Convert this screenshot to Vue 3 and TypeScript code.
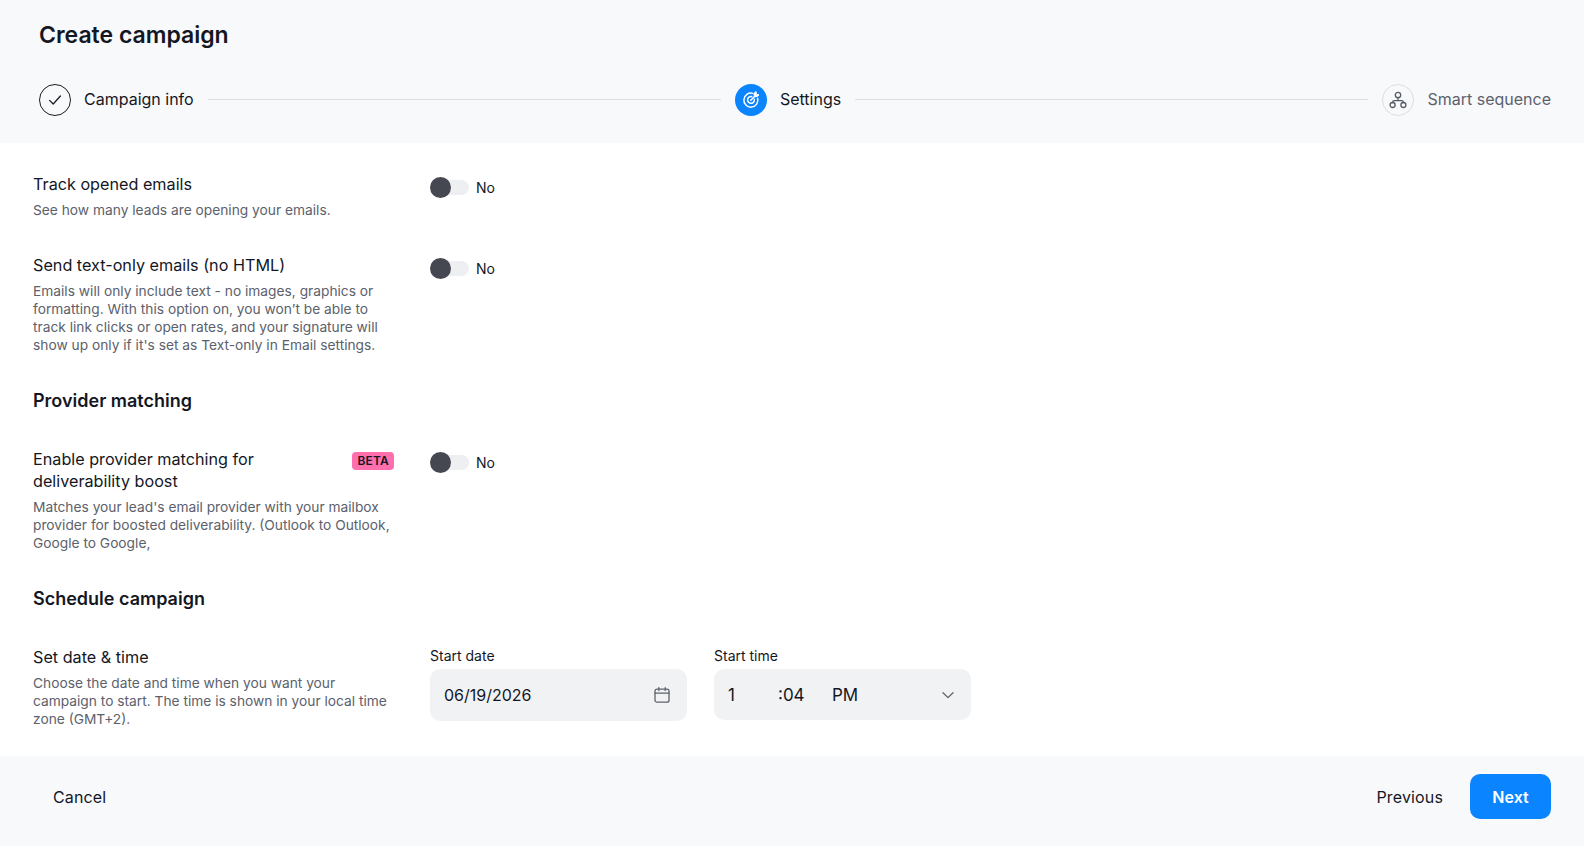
<template>
  <div class="page">
    <header class="top">
      <h1 class="title">Create campaign</h1>
      <div class="steps">
        <div class="step">
          <span class="dot dot-done">
            <svg width="16" height="16" viewBox="0 0 16 16" fill="none" stroke="#1a1d24" stroke-width="1.3" stroke-linecap="round" stroke-linejoin="round"><path d="M2.6 8.4 6.2 12l7.2-8" /></svg>
          </span>
          <span class="step-name">Campaign info</span>
        </div>
        <div class="step-line"></div>
        <div class="step">
          <span class="dot dot-active">
            <svg width="20" height="20" viewBox="0 0 20 20" fill="none" stroke="#fff" stroke-width="1.5" stroke-linecap="round" stroke-linejoin="round">
              <path d="M16.6 8.2a7 7 0 1 1-4.8-4.8" />
              <path d="M13.3 9.2a3.4 3.4 0 1 1-2.6-2.6" />
              <path d="M9.8 10.2 15 5" />
              <path d="M13 4.6 13.3 2.9 15 1.5l.4 2.9 2.6.4-1.6 1.6-1.9.3z" fill="#fff" stroke-width="1" />
            </svg>
          </span>
          <span class="step-name">Settings</span>
        </div>
        <div class="step-line"></div>
        <div class="step">
          <span class="dot dot-todo">
            <svg width="20" height="20" viewBox="0 0 20 20" fill="none" stroke="#555a65" stroke-width="1.3" stroke-linecap="round" stroke-linejoin="round">
              <circle cx="10" cy="5" r="2.7" />
              <circle cx="4.6" cy="15" r="2.5" />
              <circle cx="15.4" cy="15" r="2.5" />
              <path d="M10 7.7v3M4.6 12.5c0-1.2.6-1.8 1.8-1.8h7.2c1.2 0 1.8.6 1.8 1.8" />
            </svg>
          </span>
          <span class="step-name step-name-todo">Smart sequence</span>
        </div>
      </div>
    </header>

    <main class="content">
      <section v-for="row in toggleRows" :key="row.label" class="row" :class="row.cls">
        <div class="info">
          <div class="label">{{ row.label }}</div>
          <p class="desc">{{ row.desc }}</p>
        </div>
        <div class="toggle">
          <span class="track"><span class="knob"></span></span>
          <span class="toggle-text">No</span>
        </div>
      </section>

      <h2 class="heading heading-provider">Provider matching</h2>

      <section class="row row-provider">
        <div class="info">
          <div class="label-wrap">
            <div class="label label-narrow">Enable provider matching for deliverability boost</div>
            <span class="beta">BETA</span>
          </div>
          <p class="desc">Matches your lead's email provider with your mailbox provider for boosted deliverability. (Outlook to Outlook, Google to Google,</p>
        </div>
        <div class="toggle">
          <span class="track"><span class="knob"></span></span>
          <span class="toggle-text">No</span>
        </div>
      </section>

      <h2 class="heading heading-schedule">Schedule campaign</h2>

      <section class="row row-schedule">
        <div class="info">
          <div class="label">Set date &amp; time</div>
          <p class="desc">Choose the date and time when you want your campaign to start. The time is shown in your local time zone (GMT+2).</p>
        </div>
        <div class="fields">
          <div class="field">
            <div class="field-label">Start date</div>
            <div class="input input-date">
              <span>06/19/2026</span>
              <svg width="18" height="18" viewBox="0 0 18 18" fill="none" stroke="#5f636c" stroke-width="1.3" stroke-linecap="round" stroke-linejoin="round">
                <rect x="2" y="3.2" width="14" height="13" rx="2" />
                <path d="M2 7.2h14M5.8 1.6v3M12.2 1.6v3" />
              </svg>
            </div>
          </div>
          <div class="field">
            <div class="field-label">Start time</div>
            <div class="input input-time">
              <span class="t-hour">1</span>
              <span class="t-min">:04</span>
              <span class="t-ampm">PM</span>
              <svg class="chev" width="14" height="14" viewBox="0 0 14 14" fill="none" stroke="#5f636c" stroke-width="1.3" stroke-linecap="round" stroke-linejoin="round"><path d="M2 4.8 7 9.6l5-4.8" /></svg>
            </div>
          </div>
        </div>
      </section>
    </main>

    <footer class="bottom">
      <button class="btn btn-cancel">Cancel</button>
      <div class="bottom-right">
        <button class="btn btn-prev">Previous</button>
        <button class="btn btn-next">Next</button>
      </div>
    </footer>
  </div>
</template>

<script setup lang="ts">
interface ToggleRow {
  label: string;
  desc: string;
  cls: string;
}

const toggleRows: ToggleRow[] = [
  {
    label: 'Track opened emails',
    desc: 'See how many leads are opening your emails.',
    cls: 'row-track',
  },
  {
    label: 'Send text-only emails (no HTML)',
    desc: "Emails will only include text - no images, graphics or formatting. With this option on, you won\u2019t be able to track link clicks or open rates, and your signature will show up only if it's set as Text-only in Email settings.",
    cls: 'row-text',
  },
];
</script>

<style>
body {
  margin: 0;
  background: #fff;
}
</style>

<style scoped>
.page {
  height: 846px;
  display: flex;
  flex-direction: column;
  font-family: Inter, "Liberation Sans", sans-serif;
  color: #14171f;
  overflow: hidden;
}

/* Header */
.top {
  height: 143px;
  box-sizing: border-box;
  background: #f8f9fb;
  padding: 21px 33px 0 39px;
  flex-shrink: 0;
}

.title {
  margin: 0;
  font-size: 23px;
  line-height: 28px;
  font-weight: 600;
}

.steps {
  display: flex;
  align-items: center;
  margin-top: 35px;
  height: 32px;
}

.step {
  display: flex;
  align-items: center;
  gap: 13px;
}

.dot {
  width: 32px;
  height: 32px;
  box-sizing: border-box;
  border-radius: 50%;
  display: flex;
  align-items: center;
  justify-content: center;
}

.dot-done {
  border: 1px solid #1a1d24;
}

.dot-active {
  background: #0a84ff;
}

.dot-todo {
  border: 1px solid #dcdee3;
}

.step-name {
  font-size: 16px;
  line-height: 20px;
  white-space: nowrap;
  margin-top: -2px;
}

.step-name-todo {
  color: #5c616c;
}

.step-line {
  flex: 1;
  height: 1px;
  background: #dcdee3;
  margin: -2px 14px 0;
}

/* Main */
.content {
  flex: 1;
  padding: 30px 0 0 33px;
}

.row {
  display: grid;
  grid-template-columns: 361px auto;
  column-gap: 36px;
  justify-content: start;
}

.row-text {
  margin-top: 35px;
}

.label {
  font-size: 16.2px;
  line-height: 22px;
  font-weight: 400;
}

.desc {
  margin: 6px 0 0;
  font-size: 13.75px;
  line-height: 18px;
  color: #5c616c;
}

.label-wrap {
  display: flex;
  justify-content: space-between;
  align-items: flex-start;
}

.label-narrow {
  width: 270px;
}

.beta {
  margin-top: 4px;
  padding: 0 5px;
  height: 18px;
  line-height: 18px;
  border-radius: 4px;
  background: #ff6fae;
  font-size: 12px;
  font-weight: 600;
  letter-spacing: 0.2px;
}

.toggle {
  display: flex;
  align-items: center;
  gap: 7px;
  height: 22px;
  margin-top: 3px;
}

.track {
  width: 39px;
  height: 15px;
  border-radius: 8px;
  background: #eeeff1;
  position: relative;
}

.knob {
  position: absolute;
  left: 0;
  top: -3px;
  width: 21px;
  height: 21px;
  border-radius: 50%;
  background: #454851;
}

.toggle-text {
  font-size: 14px;
}

.heading {
  margin: 0;
  font-size: 18px;
  line-height: 24px;
  font-weight: 600;
}

.heading-provider {
  margin-top: 35px;
}

.heading-schedule {
  margin-top: 35px;
}

.row-provider {
  margin-top: 35px;
}

.row-schedule {
  margin-top: 35px;
}

/* Date and time */
.fields {
  display: flex;
  gap: 27px;
}

.field {
  width: 257px;
}

.field-label {
  font-size: 14px;
  line-height: 18px;
  font-weight: 400;
  margin-top: 1px;
}

.input {
  margin-top: 4px;
  background: #f1f2f4;
  border-radius: 10px;
  display: flex;
  align-items: center;
  box-sizing: border-box;
  font-size: 17px;
  padding: 0 16px 0 14px;
}

.input-date {
  height: 52px;
  justify-content: space-between;
  font-size: 16px;
}

.input-time {
  height: 51px;
}

.t-hour {
  width: 50px;
}

.t-min {
  width: 54px;
}

.t-ampm {
  flex: 1;
}

/* Footer */
.bottom {
  height: 90px;
  box-sizing: border-box;
  background: #f8f9fb;
  display: flex;
  justify-content: space-between;
  align-items: flex-start;
  padding: 18px 33px 0 34px;
  flex-shrink: 0;
}

.bottom-right {
  display: flex;
  align-items: center;
  gap: 8px;
}

.btn {
  border: 0;
  background: none;
  font-family: inherit;
  font-size: 16px;
  font-weight: 400;
  letter-spacing: 0.15px;
  color: #14171f;
  height: 45px;
  padding: 0 19px;
  border-radius: 10px;
}

.btn-next {
  width: 81px;
  padding: 0;
  background: #0a84ff;
  color: #fff;
  font-weight: 600;
  letter-spacing: 0;
}
</style>
